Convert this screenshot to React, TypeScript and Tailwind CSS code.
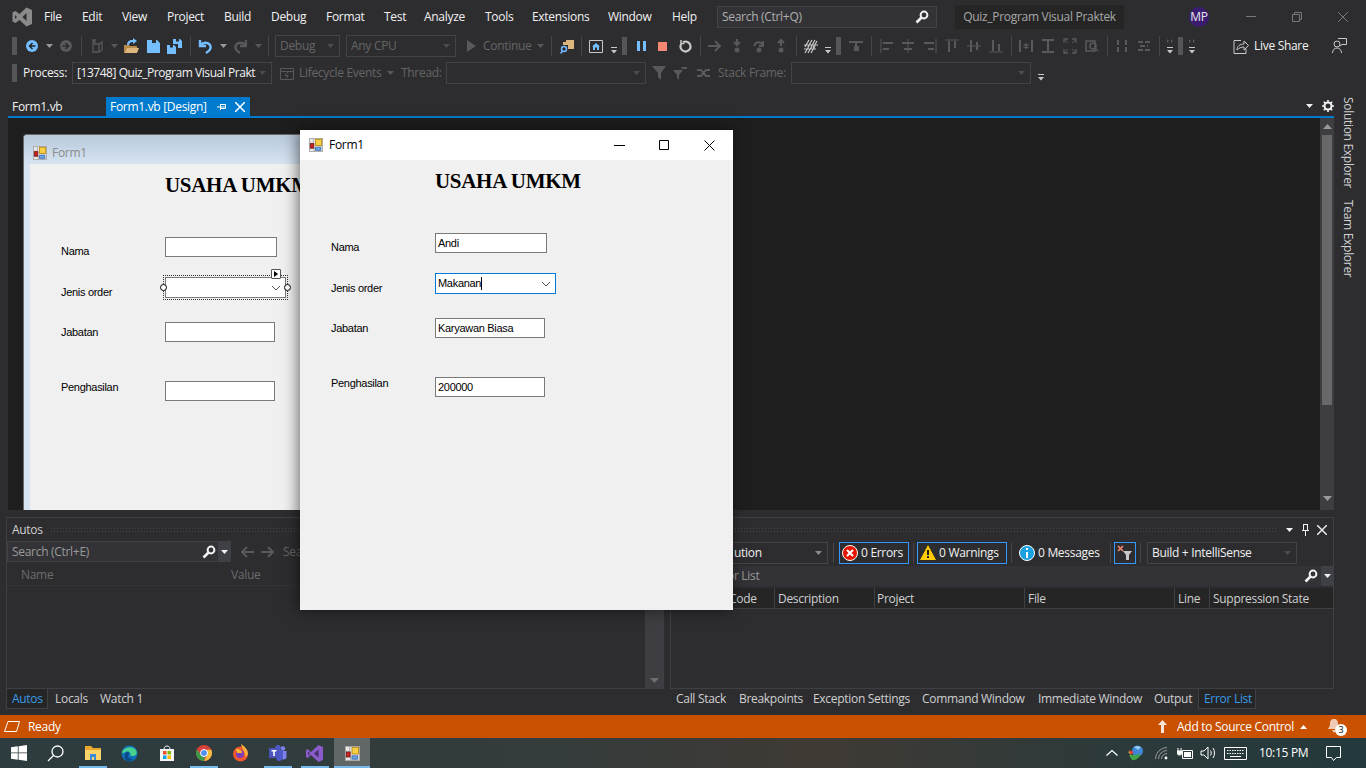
import type { ReactNode } from 'react';

const MENU = [
  { label: 'File', cls: 'w-[38px]' },
  { label: 'Edit', cls: 'w-[40px]' },
  { label: 'View', cls: 'w-[45px]' },
  { label: 'Project', cls: 'w-[57px]' },
  { label: 'Build', cls: 'w-[47px]' },
  { label: 'Debug', cls: 'w-[55px]' },
  { label: 'Format', cls: 'w-[58px]' },
  { label: 'Test', cls: 'w-[40px]' },
  { label: 'Analyze', cls: 'w-[61px]' },
  { label: 'Tools', cls: 'w-[47px]' },
  { label: 'Extensions', cls: 'w-[76px]' },
  { label: 'Window', cls: 'w-[64px]' },
  { label: 'Help', cls: 'w-[45px]' },
];

const ERROR_COLUMNS = [
  { label: 'Code', cls: 'w-[45px]' },
  { label: 'Description', cls: 'w-[100px] pl-[3px] border-l border-[#3f3f46]' },
  { label: 'Project', cls: 'w-[150px] pl-[2px] border-l border-[#3f3f46]' },
  { label: 'File', cls: 'w-[150px] pl-[3px] border-l border-[#3f3f46]' },
  { label: 'Line', cls: 'w-[35px] pl-[3px] border-l border-[#3f3f46]' },
  { label: 'Suppression State', cls: 'flex-1 pl-[3px] border-l border-[#3f3f46]' },
];

const BOTTOM_TABS = [
  { label: 'Call Stack', cls: 'w-[63px]' },
  { label: 'Breakpoints', cls: 'w-[74px]' },
  { label: 'Exception Settings', cls: 'w-[109px]' },
  { label: 'Command Window', cls: 'w-[116px]' },
  { label: 'Immediate Window', cls: 'w-[116px]' },
  { label: 'Output', cls: 'w-[44px]' },
];

function Down({ cls = 'text-[#8a8a8c]' }: { cls?: string }) {
  return (
    <svg width="7" height="4" viewBox="0 0 7 4" className={`shrink-0 ${cls}`}>
      <path d="M0 0h7L3.500 4z" fill="currentColor" />
    </svg>
  );
}

function Grip({ cls = '' }: { cls?: string }) {
  return <div className={`h-[18px] w-[5px] shrink-0 bg-[radial-gradient(#59595c_0.7px,transparent_0.8px)] bg-[length:2px_2px] ${cls}`} />;
}

function Sep({ cls = '' }: { cls?: string }) {
  return <div className={`h-[20px] w-px shrink-0 bg-[#46464a] ${cls}`} />;
}

function Overflow({ cls = '' }: { cls?: string }) {
  return (
    <svg width="6" height="7" viewBox="0 0 6 7" className={`mt-[9px] shrink-0 ${cls}`}>
      <path d="M0 .5h6" stroke="#c8c8c8" />
      <path d="M0 3h6L3 6.500z" fill="#c8c8c8" />
    </svg>
  );
}

function Magnifier({ cls = '' }: { cls?: string }) {
  return (
    <svg width="14" height="14" viewBox="0 0 14 14" className={`shrink-0 ${cls}`}>
      <circle cx="9" cy="5" r="3.400" fill="none" stroke="#f1f1f1" strokeWidth="2" />
      <path d="M6.500 7.500 1.500 12.500" stroke="#f1f1f1" strokeWidth="2.600" />
    </svg>
  );
}

function G({ w = 14, cls = '', children }: { w?: number; cls?: string; children: ReactNode }) {
  return (
    <svg width={w} height="16" viewBox={`0 0 ${w} 16`} className={`shrink-0 ${cls}`} fill="none" stroke="#59595c" strokeWidth="2">
      {children}
    </svg>
  );
}

function Combo({ label, cls, active = false }: { label?: string; cls: string; active?: boolean }) {
  return (
    <div className={`flex h-[22px] shrink-0 items-center justify-between border border-[#434346] pl-[4px] pr-[5px] ${active ? 'bg-[#333337] text-[#f1f1f1]' : 'text-[#656565]'} ${cls}`}>
      <span className="whitespace-nowrap">{label}</span>
      <Down cls={active ? 'text-[#999999]' : 'text-[#4c4c4e]'} />
    </div>
  );
}

function FormIcon({ size = 16 }: { size?: number }) {
  return (
    <svg width={size} height={size} viewBox="0 0 16 16" className="shrink-0">
      <rect x="0.500" y="0.500" width="15" height="15" fill="#e8e8e8" stroke="#a8a8a8" />
      <path d="M0 6h6M5 0v6M0 12h6M6 12v4M11 10v6" stroke="#a8a8a8" />
      <rect x="7.500" y="1.500" width="7" height="7" fill="#f6cf45" stroke="#b98a12" />
      <rect x="1.500" y="6.500" width="4" height="5" fill="#d02020" stroke="#7c1515" />
      <rect x="7.500" y="10.500" width="6" height="3.500" fill="#6ea4e4" stroke="#3a70b8" />
    </svg>
  );
}

function Field({ value, cls }: { value?: string; cls: string }) {
  return (
    <div className={`absolute flex h-[20px] items-center border border-[#7a7a7a] bg-white pl-[2px] pt-[1px] text-[#000000] ${cls}`}>
      {value}
    </div>
  );
}

function Caption({ text, cls }: { text: string; cls: string }) {
  return <div className={`absolute whitespace-nowrap leading-[13px] text-[#000000] ${cls}`}>{text}</div>;
}

function FormFields({ values, focused }: { values: string[]; focused: boolean }) {
  return (
    <div className="font-['Liberation_Sans',Arial,sans-serif] text-[11px]">
      <div className="absolute left-[135px] top-[8px] whitespace-nowrap font-['Liberation_Serif',serif] text-[21px] font-bold leading-[26px] text-[#000000]">USAHA UMKM</div>
      <Caption text="Nama" cls="left-[31px] top-[81px]" />
      <Caption text="Jenis order" cls="left-[31px] top-[122px]" />
      <Caption text="Jabatan" cls="left-[31px] top-[162px]" />
      <Caption text="Penghasilan" cls="left-[31px] top-[217px]" />
      <Field value={values[0]} cls="left-[135px] top-[73px] w-[112px]" />
      <div className={`absolute left-[135px] top-[113px] flex h-[21px] w-[121px] items-center justify-between border bg-white pl-[2px] pr-[4px] text-[#000000] ${focused ? 'border-[#0078d7]' : 'border-[#7a7a7a]'}`}>
        <span className="flex items-center">
          {values[1]}
          {focused && <span className="h-[13px] w-px bg-black" />}
        </span>
        <svg width="10" height="6" viewBox="0 0 10 6">
          <path d="M1 1l4 4 4-4" fill="none" stroke="#555555" />
        </svg>
      </div>
      <Field value={values[2]} cls="left-[135px] top-[158px] w-[110px]" />
      <Field value={values[3]} cls="left-[135px] top-[217px] w-[110px]" />
    </div>
  );
}

function TitleBar() {
  return (
    <div className="flex h-[33px] shrink-0 items-center">
      <svg width="20" height="20" viewBox="0 0 20 20" className="ml-[12px] shrink-0">
        <path fillRule="evenodd" fill="#8a8a8a" d="M14.500 0.500 20 3v14l-5.500 2.500L7.500 13l-4 3L0.500 14.500v-9L3.500 4l4 3zM14.500 6 10.500 10l4 4zM3 8v4l2-2z" />
      </svg>
      <div className="ml-[12px] flex w-[673px] shrink-0 text-[#f1f1f1]">
        {MENU.map((m) => (
          <span key={m.label} className={`whitespace-nowrap ${m.cls}`}>{m.label}</span>
        ))}
      </div>
      <div className="flex h-[22px] w-[220px] shrink-0 items-center justify-between border border-[#434346] bg-[#333337] pl-[4px] pr-[7px] text-[#aeaeae]">
        <span>Search (Ctrl+Q)</span>
        <Magnifier />
      </div>
      <div className="ml-[18px] flex h-[24px] w-[169px] shrink-0 items-center justify-center whitespace-nowrap bg-[#252526] text-[#a8a8a8]">Quiz_Program Visual Praktek</div>
      <div className="ml-[65px] flex h-[20px] w-[20px] shrink-0 items-center justify-center rounded-full bg-[#3a1c71] text-[#e6e6e6]">MP</div>
      <svg width="10" height="1" viewBox="0 0 10 1" className="ml-[37px] shrink-0"><path d="M0 .5h10" stroke="#777777" /></svg>
      <svg width="10" height="10" viewBox="0 0 10 10" className="ml-[36px] shrink-0" fill="none" stroke="#777777">
        <path d="M.5 2.500h7v7h-7zM2.500 2.500v-2h7v7h-2" />
      </svg>
      <svg width="10" height="10" viewBox="0 0 10 10" className="ml-[36px] shrink-0" stroke="#777777">
        <path d="M0 0l10 10M10 0L0 10" />
      </svg>
    </div>
  );
}

function MainToolbar() {
  return (
    <div className="flex h-[27px] shrink-0 items-center pb-[1px] pl-[12px]">
      <Grip />
      <svg width="12" height="12" viewBox="0 0 12 12" className="ml-[9px] shrink-0">
        <circle cx="6" cy="6" r="6" fill="#75beff" />
        <path d="M6.500 3 3.500 6l3 3M3.500 6h6" stroke="#252526" strokeWidth="1.500" fill="none" />
      </svg>
      <Down cls="ml-[8px] text-[#999999]" />
      <svg width="12" height="12" viewBox="0 0 12 12" className="ml-[7px] shrink-0">
        <circle cx="6" cy="6" r="6" fill="#59595c" />
        <path d="M5.500 3l3 3-3 3M8.500 6h-6" stroke="#2d2d30" strokeWidth="1.500" fill="none" />
      </svg>
      <Sep cls="ml-[9px]" />
      <G cls="ml-[8px]" w={14}>
        <path d="M3 6h6v8H3zM9 6l3-2v8l-3 2" strokeWidth="1.300" />
        <path d="M4 1v4M2 3h4M2 1l4 4M6 1 2 5" strokeWidth="1" />
      </G>
      <Down cls="ml-[7px] text-[#59595c]" />
      <svg width="15" height="16" viewBox="0 0 15 16" className="ml-[6px] shrink-0">
        <path d="M0 7h5l1 1h7v2H4l-1.500 5H0z" fill="#b88a4c" />
        <path d="M3 10h12l-2 5H1z" fill="#dcb67a" />
        <path d="M3 7C3 3 6 1.500 9 2V0l4 3-4 3V4C7 3.500 5 5 5 7z" fill="#75beff" />
      </svg>
      <svg width="13" height="13" viewBox="0 0 13 13" className="ml-[8px] shrink-0">
        <path fillRule="evenodd" fill="#75beff" d="M0 0h10l3 3v10H0zM5 0v3h4V0z" />
      </svg>
      <svg width="15" height="15" viewBox="0 0 15 15" className="ml-[7px] shrink-0">
        <path fillRule="evenodd" fill="#75beff" d="M6 0h7l2 2v7h-4V5H6zM9 0v2.500h3V0z" />
        <path fillRule="evenodd" fill="#75beff" d="M0 6h7l2 2v7H0zM3 6v2.500h3V6z" />
      </svg>
      <Sep cls="ml-[8px]" />
      <svg width="14" height="15" viewBox="0 0 14 15" className="ml-[7px] shrink-0" fill="none" stroke="#75beff" strokeWidth="2.400">
        <path d="M2 1v6h6M2.500 6.500C5 3 10 3 12 6c1.500 3-.5 6-4 8" />
      </svg>
      <Down cls="ml-[8px] text-[#999999]" />
      <svg width="13" height="15" viewBox="0 0 13 15" className="ml-[7px] shrink-0" fill="none" stroke="#59595c" strokeWidth="2.400">
        <path d="M12 1v6H6M11.500 6.500C9 3 4 3 2 6c-1.500 3 .5 6 4 8" />
      </svg>
      <Down cls="ml-[8px] text-[#59595c]" />
      <Sep cls="ml-[6px]" />
      <Combo label="Debug" cls="ml-[6px] w-[65px]" />
      <Combo label="Any CPU" cls="ml-[6px] w-[110px]" />
      <svg width="9" height="12" viewBox="0 0 9 12" className="ml-[11px] shrink-0"><path d="M0 0l9 6-9 6z" fill="#59595c" /></svg>
      <span className="ml-[7px] w-[49px] shrink-0 whitespace-nowrap text-[#656565]">Continue</span>
      <Down cls="ml-[5px] text-[#59595c]" />
      <Sep cls="ml-[7px]" />
      <svg width="14" height="15" viewBox="0 0 14 15" className="ml-[8px] shrink-0">
        <path d="M3 3h3V1h8v9H8V6H3z" fill="#dcb67a" />
        <circle cx="4" cy="10" r="2.500" fill="none" stroke="#75beff" strokeWidth="1.500" />
        <path d="M2.500 12 .5 14.500" stroke="#75beff" strokeWidth="1.500" />
      </svg>
      <Sep cls="ml-[7px]" />
      <svg width="14" height="13" viewBox="0 0 14 13" className="ml-[7px] shrink-0">
        <path d="M.5.500h13v12H.5z" fill="none" stroke="#c8c8c8" />
        <path d="M7 3l4 3.500H10V10H8V7.500H6V10H4V6.500H3z" fill="#75beff" />
      </svg>
      <Overflow cls="ml-[8px]" />
      <Grip cls="ml-[5px]" />
      <svg width="9" height="10" viewBox="0 0 9 10" className="ml-[10px] shrink-0"><path d="M0 0h3v10H0zM6 0h3v10H6z" fill="#75beff" /></svg>
      <div className="ml-[12px] h-[9px] w-[9px] shrink-0 bg-[#f48771]" />
      <svg width="13" height="14" viewBox="0 0 13 14" className="ml-[12px] shrink-0" fill="none" stroke="#c8c8c8" strokeWidth="2.200">
        <path d="M4 3.200A5 5 0 1 1 2.200 5" />
        <path d="M2 1v3.500h3.500" strokeWidth="1.500" />
      </svg>
      <Sep cls="ml-[8px]" />
      <G cls="ml-[7px]"><path d="M0 8h12M7 3l5 5-5 5" /></G>
      <G cls="ml-[9px]" w={12}><path d="M6 1v6M3 4l3 3 3-3" /><circle cx="6" cy="12" r="1.500" fill="#59595c" /></G>
      <G cls="ml-[9px]"><path d="M2 8c2-5 7-5 9 0M11 3v5H7" /><circle cx="7" cy="12" r="1.500" fill="#59595c" /></G>
      <G cls="ml-[9px]" w={12}><path d="M6 8V2M3 5l3-3 3 3" /><circle cx="6" cy="12" r="1.500" fill="#59595c" /></G>
      <Sep cls="ml-[9px]" />
      <svg width="14" height="15" viewBox="0 0 14 15" className="ml-[7px] shrink-0" stroke="#c8c8c8" strokeWidth="1.200" fill="none">
        <path d="M5 1 1 8M8 1 4 8M11 1 7 8M13 2 9 9M5 7l-4 7M8 7l-4 7M11 7l-4 7M0 6h14M0 10h12" />
      </svg>
      <Overflow cls="ml-[7px]" />
      <Grip cls="ml-[5px]" />
      <G cls="ml-[8px]"><path d="M0 4h14M7 4v9" /><path d="M5 8h5v5H5z" fill="#59595c" strokeWidth="0" /></G>
      <Sep cls="ml-[8px]" />
      <G cls="ml-[8px]"><path d="M1 1v14" strokeWidth="1" /><path d="M3 5h10M3 11h6" /></G>
      <G cls="ml-[7px]"><path d="M7 1v14" strokeWidth="1" /><path d="M1 5h12M3 11h8" /></G>
      <G cls="ml-[8px]"><path d="M13 1v14" strokeWidth="1" /><path d="M1 5h10M5 11h6" /></G>
      <G cls="ml-[8px]"><path d="M0 2h14" strokeWidth="1" /><path d="M4 3v11M10 3v7" /></G>
      <G cls="ml-[8px]"><path d="M0 8h14" strokeWidth="1" /><path d="M4 2v12M10 4v8" /></G>
      <G cls="ml-[8px]"><path d="M0 14h14" strokeWidth="1" /><path d="M4 2v11M10 6v7" /></G>
      <Sep cls="ml-[8px]" />
      <G cls="ml-[7px]"><path d="M1 2v12M13 2v12" /><path d="M7 5v6M4.500 6.500l5 3M9.500 6.500l-5 3" strokeWidth="1.300" /></G>
      <G cls="ml-[8px]"><path d="M1 2h12M1 14h12M7 3v10" /></G>
      <G cls="ml-[8px]"><path d="M1 5V1h4M13 5V1H9M1 11v4h4M13 11v4H9" strokeWidth="1.300" /><path d="M2 2l3 3M12 2 9 5M2 14l3-3M12 14l-3-3" strokeWidth="1" /></G>
      <G cls="ml-[8px]"><path d="M1 3h9v10H1z" strokeWidth="1.500" /><circle cx="8" cy="8" r="3" strokeWidth="1.500" /><path d="M10 10l3 3" strokeWidth="1.500" /></G>
      <Sep cls="ml-[8px]" />
      <G cls="ml-[9px]" w={10}><path d="M1 2v12M9 2v12" strokeDasharray="5 2" /></G>
      <G cls="ml-[10px]"><path d="M1 4h12M3 8h8M1 12h12" strokeDasharray="5 2" /></G>
      <Sep cls="ml-[8px]" />
      <div className="ml-[7px] flex shrink-0 flex-col items-center gap-[4px]">
        <svg width="6" height="4" viewBox="0 0 6 4"><path d="M0 0l2 2-2 2zM4 0l2 2-2 2z" fill="#59595c" /></svg>
        <Overflow cls="!mt-0" />
      </div>
      <Grip cls="ml-[5px]" />
      <div className="ml-[6px] flex shrink-0 flex-col items-center gap-[4px]">
        <svg width="6" height="4" viewBox="0 0 6 4"><path d="M0 0l2 2-2 2zM4 0l2 2-2 2z" fill="#59595c" /></svg>
        <Overflow cls="!mt-0" />
      </div>
      <svg width="16" height="16" viewBox="0 0 16 16" className="ml-[38px] shrink-0" fill="none" stroke="#c8c8c8">
        <path d="M8 2.500H1v13h12v-5" />
        <path d="M4 12c0-4 3-6 7-6V3l4.500 4.500L11 12V9c-3 0-5 1-7 3z" fill="#2d2d30" />
      </svg>
      <span className="ml-[5px] w-[54px] shrink-0 whitespace-nowrap text-[#f1f1f1]">Live Share</span>
      <svg width="15" height="16" viewBox="0 0 15 16" className="ml-[24px] shrink-0" fill="none" stroke="#c8c8c8">
        <circle cx="5" cy="6" r="3" />
        <path d="M.5 15c0-3 2-5 4.500-5s4.500 2 4.500 5" />
        <path d="M6 .5h8.500v6H10L8 8" />
      </svg>
    </div>
  );
}

function DebugToolbar() {
  return (
    <div className="flex h-[26px] shrink-0 items-center pl-[12px]">
      <Grip />
      <span className="ml-[6px] w-[43px] shrink-0 whitespace-nowrap text-[#f1f1f1]">Process:</span>
      <Combo label="[13748] Quiz_Program Visual Prakt" cls="ml-[6px] w-[200px] !text-[#f1f1f1] tracking-[-0.45px]" />
      <svg width="14" height="13" viewBox="0 0 14 13" className="ml-[8px] shrink-0" fill="none" stroke="#59595c">
        <path d="M.5 1.500h13v11H.5zM.5 4.500h13" />
        <path d="M8 5 5 8.500h3L6 11.500" />
      </svg>
      <span className="ml-[5px] w-[83px] shrink-0 whitespace-nowrap text-[#656565]">Lifecycle Events</span>
      <Down cls="ml-[5px] text-[#59595c]" />
      <span className="ml-[7px] w-[38px] shrink-0 whitespace-nowrap text-[#656565]">Thread:</span>
      <Combo cls="ml-[7px] w-[200px]" />
      <svg width="14" height="14" viewBox="0 0 14 14" className="ml-[6px] shrink-0"><path d="M0 0h14L9 7v7L6 11V7z" fill="#59595c" /></svg>
      <svg width="15" height="13" viewBox="0 0 15 13" className="ml-[7px] shrink-0"><path d="M0 3h10L6 8v5L4 11V8zM8 0h6v2H9z" fill="#59595c" /></svg>
      <svg width="15" height="10" viewBox="0 0 15 10" className="ml-[8px] shrink-0" fill="none" stroke="#59595c" strokeWidth="2"><path d="M1 2h4l5 6h4M1 8h4l5-6h4" /></svg>
      <span className="ml-[7px] w-[66px] shrink-0 whitespace-nowrap text-[#656565]">Stack Frame:</span>
      <Combo cls="ml-[7px] w-[240px]" />
      <Overflow cls="ml-[7px]" />
    </div>
  );
}

function DocTabs() {
  return (
    <div className="ml-[8px] flex h-[32px] shrink-0 items-end border-b-2 border-[#007acc]">
      <div className="flex h-[19px] w-[98px] items-center pl-[4px] text-[#f1f1f1]">Form1.vb</div>
      <div className="flex h-[19px] w-[144px] items-center bg-[#007acc] pl-[4px] text-[#ffffff]">
        <span className="w-[107px] whitespace-nowrap">Form1.vb [Design]</span>
        <svg width="10" height="8" viewBox="0 0 10 8" fill="none" stroke="#ffffff"><path d="M0 4h3M3.500 1v6M3.500 1.500h5v4h-5M3.500 4h5" /></svg>
        <svg width="10" height="10" viewBox="0 0 10 10" className="ml-[8px]" stroke="#ffffff" strokeWidth="1.500"><path d="M0 0l10 10M10 0L0 10" /></svg>
      </div>
      <div className="ml-auto mb-[4px] flex items-center gap-[9px]">
        <Down cls="text-[#f1f1f1]" />
        <svg width="12" height="12" viewBox="0 0 12 12">
          <circle cx="6" cy="6" r="3.500" fill="none" stroke="#f1f1f1" strokeWidth="2" />
          <path d="M6 0v2.500M6 9.500V12M0 6h2.500M9.500 6H12M1.800 1.800l1.800 1.800M8.400 8.400l1.800 1.800M10.200 1.800 8.400 3.600M3.600 8.400l-1.800 1.800" stroke="#f1f1f1" strokeWidth="1.600" />
        </svg>
      </div>
    </div>
  );
}

function DesignerForm() {
  return (
    <div className="absolute left-[15px] top-[16px] flex h-[376px] w-[500px] flex-col rounded-t-[4px] border-l border-t border-[#6a6a6a] bg-[#d7e4f2]">
      <div className="flex h-[29px] shrink-0 items-center gap-[5px] rounded-t-[4px] bg-[linear-gradient(#b9c9da,#d6e4f2)] pl-[9px] pt-[6px] text-[#8c8c8c]">
        <FormIcon size={14} />
        <span>Form1</span>
      </div>
      <div className="relative ml-[6px] flex-1 bg-[#f0f0f0]">
        <FormFields values={['', '', '', '']} focused={false} />
        <div className="absolute left-[133px] top-[111px] h-[25px] w-[125px] border border-dotted border-[#333333]" />
        <div className="absolute left-[130px] top-[120px] h-[7px] w-[7px] rounded-full border border-black bg-white" />
        <div className="absolute left-[254px] top-[120px] h-[7px] w-[7px] rounded-full border border-black bg-white" />
        <div className="absolute left-[241px] top-[105px] flex h-[10px] w-[10px] items-center justify-center rounded-[1px] border border-[#555555] bg-white">
          <svg width="4" height="6" viewBox="0 0 4 6"><path d="M0 0l4 3-4 3z" fill="#000000" /></svg>
        </div>
      </div>
    </div>
  );
}

function DocArea() {
  return (
    <div className="flex h-[392px] shrink-0 pl-[8px]">
      <div className="relative flex-1 bg-[#1e1e1e]">
        <DesignerForm />
      </div>
      <div className="flex w-[14px] shrink-0 flex-col items-center bg-[#3e3e42] pt-[6px]">
        <svg width="9" height="5" viewBox="0 0 9 5"><path d="M0 5h9L4.500 0z" fill="#999999" /></svg>
        <div className="mt-[6px] h-[270px] w-[10px] bg-[#686868]" />
        <svg width="9" height="5" viewBox="0 0 9 5" className="mt-[91px]"><path d="M0 0h9L4.500 5z" fill="#999999" /></svg>
      </div>
    </div>
  );
}

function AutosPanel() {
  return (
    <div className="ml-[6px] flex h-[172px] w-[658px] shrink-0 flex-col border border-[#3f3f46]">
      <div className="flex h-[23px] shrink-0 items-center pl-[5px] text-[#d0d0d0]">
        <span className="w-[38px]">Autos</span>
        <div className="h-[5px] flex-1 bg-[radial-gradient(#46464a_0.7px,transparent_0.8px)] bg-[length:3px_3px]" />
      </div>
      <div className="flex min-h-0 flex-1">
        <div className="flex min-w-0 flex-1 flex-col">
          <div className="flex h-[21px] shrink-0 items-center">
            <div className="flex h-[21px] w-[224px] shrink-0 items-center justify-between border border-[#3f3f46] bg-[#333337] pl-[4px] text-[#999999]">
              <span>Search (Ctrl+E)</span>
              <div className="flex h-full items-center">
                <Magnifier cls="mr-[2px]" />
                <div className="flex h-full w-[12px] items-center justify-center bg-[#3f3f46]"><Down cls="text-[#f1f1f1]" /></div>
              </div>
            </div>
            <svg width="14" height="12" viewBox="0 0 14 12" className="ml-[9px]" fill="none" stroke="#59595c" strokeWidth="2"><path d="M14 6H2M7 1 2 6l5 5" /></svg>
            <svg width="14" height="12" viewBox="0 0 14 12" className="ml-[7px]" fill="none" stroke="#59595c" strokeWidth="2"><path d="M0 6h12M7 1l5 5-5 5" /></svg>
            <span className="ml-[8px] text-[#656565]">Sea</span>
          </div>
          <div className="mt-[3px] flex h-[21px] shrink-0 items-center border-b border-[#333337] pl-[14px] text-[#6b6b6b]">
            <span className="w-[210px]">Name</span>
            <span>Value</span>
          </div>
        </div>
        <div className="flex w-[18px] shrink-0 flex-col items-center justify-end bg-[#3e3e42] pb-[5px]">
          <svg width="9" height="5" viewBox="0 0 9 5"><path d="M0 0h9L4.500 5z" fill="#6e6e6e" /></svg>
        </div>
      </div>
    </div>
  );
}

function CountButton({ cls, label, on = true, children }: { cls: string; label: string; on?: boolean; children: ReactNode }) {
  return (
    <div className={`flex h-[22px] shrink-0 items-center gap-[3px] border pl-[2px] text-[#f1f1f1] ${on ? 'border-[#3399ff]' : 'border-transparent'} ${cls}`}>
      {children}
      <span className="whitespace-nowrap">{label}</span>
    </div>
  );
}

function ErrorPanel() {
  return (
    <div className="ml-[6px] flex h-[172px] w-[664px] shrink-0 flex-col border border-[#3f3f46]">
      <div className="flex h-[23px] shrink-0 items-center justify-end">
        <div className="mr-[8px] h-[5px] flex-1 bg-[radial-gradient(#46464a_0.7px,transparent_0.8px)] bg-[length:3px_3px]" />
        <Down cls="text-[#f1f1f1]" />
        <svg width="7" height="12" viewBox="0 0 7 12" className="ml-[9px]" fill="none" stroke="#f1f1f1"><path d="M1 .5h5M1.500 .5v6M5.500 .5v6M0 6.500h7M3.500 7v5" /></svg>
        <svg width="10" height="10" viewBox="0 0 10 10" className="ml-[8px] mr-[6px]" stroke="#f1f1f1" strokeWidth="1.400"><path d="M0 0l10 10M10 0 0 10" /></svg>
      </div>
      <div className="flex h-[23px] shrink-0 items-center">
        <div className="flex h-[22px] w-[157px] shrink-0 items-center justify-between border border-[#434346] pl-[62px] pr-[5px] text-[#f1f1f1]">
          <span>ution</span>
          <Down cls="text-[#8a8a8c]" />
        </div>
        <Sep cls="ml-[5px]" />
        <CountButton cls="ml-[5px] w-[70px]" label="0 Errors">
          <svg width="16" height="16" viewBox="0 0 16 16" className="shrink-0">
            <circle cx="8" cy="8" r="7.500" fill="#e51400" stroke="#ffffff" />
            <path d="M5 5l6 6M11 5l-6 6" stroke="#ffffff" strokeWidth="2" />
          </svg>
        </CountButton>
        <Sep cls="ml-[4px]" />
        <CountButton cls="ml-[3px] w-[90px]" label="0 Warnings">
          <svg width="16" height="15" viewBox="0 0 16 15" className="shrink-0">
            <path d="M8 0l8 15H0z" fill="#ffcc00" />
            <path d="M7 5h2v5H7zM7 11h2v2H7z" fill="#1e1e1e" />
          </svg>
        </CountButton>
        <Sep cls="ml-[4px]" />
        <CountButton cls="ml-[4px] w-[80px]" label="0 Messages" on={false}>
          <svg width="16" height="16" viewBox="0 0 16 16" className="shrink-0">
            <circle cx="8" cy="8" r="7.500" fill="#1ba1e2" stroke="#ffffff" />
            <path d="M7 3h2v2H7zM7 7h2v6H7z" fill="#ffffff" />
          </svg>
        </CountButton>
        <Sep cls="ml-[14px]" />
        <div className="ml-[3px] flex h-[22px] w-[22px] shrink-0 items-center justify-center border border-[#3399ff]">
          <svg width="16" height="15" viewBox="0 0 16 15">
            <path d="M1 1l5 5M6 1 1 6" stroke="#f48771" strokeWidth="1.600" />
            <path d="M6 6h9l-3 4v5h-3v-5z" fill="#c8c8c8" />
          </svg>
        </div>
        <Sep cls="ml-[4px]" />
        <Combo label="Build + IntelliSense" cls="ml-[6px] w-[150px] !text-[#f1f1f1]" />
      </div>
      <div className="mt-[2px] flex h-[20px] shrink-0 items-center justify-between bg-[#333337] pl-[56px] text-[#999999]">
        <span>or List</span>
        <div className="flex h-full items-center">
          <Magnifier cls="mr-[3px]" />
          <div className="flex h-full w-[12px] items-center justify-center bg-[#3f3f46]"><Down cls="text-[#f1f1f1]" /></div>
        </div>
      </div>
      <div className="mt-[2px] flex h-[21px] shrink-0 items-center border-b border-[#3f3f46] bg-[#252526] pl-[58px] text-[#d0d0d0]">
        {ERROR_COLUMNS.map((c) => (
          <div key={c.label} className={`flex h-full shrink-0 items-center whitespace-nowrap pt-[1px] ${c.cls}`}>{c.label}</div>
        ))}
      </div>
    </div>
  );
}

function BottomTabs() {
  return (
    <div className="flex h-[26px] shrink-0">
      <div className="ml-[6px] flex h-[20px] w-[42px] shrink-0 items-center border border-t-0 border-[#3f3f46] bg-[#252526] pl-[5px] text-[#3a9ce8]">Autos</div>
      <div className="flex h-[20px] w-[52px] shrink-0 items-center pl-[7px] text-[#d0d0d0]">Locals</div>
      <div className="flex h-[20px] w-[576px] shrink-0 items-center text-[#d0d0d0]">Watch 1</div>
      {BOTTOM_TABS.map((t) => (
        <div key={t.label} className={`flex h-[20px] shrink-0 items-center whitespace-nowrap text-[#d0d0d0] ${t.cls}`}>{t.label}</div>
      ))}
      <div className="flex h-[20px] w-[58px] shrink-0 items-center border border-t-0 border-[#3f3f46] bg-[#252526] pl-[5px] text-[#3a9ce8]">Error List</div>
    </div>
  );
}

function StatusBar() {
  return (
    <div className="flex h-[23px] shrink-0 items-center bg-[#ca5100] text-[#ffffff]">
      <svg width="16" height="11" viewBox="0 0 16 11" className="ml-[4px] shrink-0" fill="none" stroke="#ffffff">
        <path d="M4 .5h11.500l-3 10H.5z" />
      </svg>
      <span className="ml-[8px]">Ready</span>
      <svg width="9" height="13" viewBox="0 0 9 13" className="ml-auto shrink-0" fill="#ffffff" fillOpacity="0.85">
        <path d="M4.500 0 9 5H6v8H3V5H0z" />
      </svg>
      <span className="ml-[10px] whitespace-nowrap">Add to Source Control</span>
      <svg width="7" height="4" viewBox="0 0 7 4" className="ml-[6px] shrink-0"><path d="M0 4h7L3.500 0z" fill="#ffffff" /></svg>
      <div className="relative ml-[21px] mr-[22px] h-[16px] w-[16px] shrink-0">
        <svg width="12" height="14" viewBox="0 0 12 14"><path d="M6 0c3 0 4 2 4 5 0 3 2 4 2 5H0c0-1 2-2 2-5 0-3 1-5 4-5zM4 11h4l-2 3z" fill="#ffffff" fillOpacity="0.7" /></svg>
        <div className="absolute left-[7px] top-[5px] flex h-[12px] w-[12px] items-center justify-center rounded-full bg-white text-[9px] leading-none text-black">3</div>
      </div>
    </div>
  );
}

function TaskSlot({ cls = '', active = false, open = false, children }: { cls?: string; active?: boolean; open?: boolean; children: ReactNode }) {
  return (
    <div className={`relative flex h-[30px] w-[37px] shrink-0 items-center justify-center ${active ? 'bg-[#606766]' : ''} ${cls}`}>
      {children}
      {open && <div className={`absolute bottom-0 h-[2px] bg-[#76b9ed] ${active ? 'left-0 right-0' : 'left-[5px] right-[4px]'}`} />}
    </div>
  );
}

function Taskbar() {
  return (
    <div className="flex h-[30px] shrink-0 items-center bg-[linear-gradient(90deg,#2d3c3e_0%,#343c3c_40%,#403a34_60%,#2f3a3a_78%,#23393c_100%)] text-[#ffffff]">
      <TaskSlot>
        <svg width="16" height="16" viewBox="0 0 16 16"><path d="M0 2.300 6.800 1.300v6.200H0zM7.600 1.200 16 0v7.500H7.600zM0 8.300h6.800v6.400L0 13.700zM7.600 8.300H16V16l-8.400-1.200z" fill="#ffffff" /></svg>
      </TaskSlot>
      <TaskSlot>
        <svg width="17" height="17" viewBox="0 0 17 17" fill="none" stroke="#ffffff" strokeWidth="1.300"><circle cx="10.500" cy="6.500" r="5.500" /><path d="M6.500 10.500 1 16" /></svg>
      </TaskSlot>
      <TaskSlot open>
        <svg width="16" height="14" viewBox="0 0 16 14">
          <path d="M0 0h6l2 2h8v12H0z" fill="#e8a82e" />
          <path d="M0 4h16v10H0z" fill="#fbd46a" />
          <path d="M5 8h6v6H9v-3H7v3H5z" fill="#3a8bd8" />
        </svg>
      </TaskSlot>
      <TaskSlot>
        <svg width="17" height="17" viewBox="0 0 17 17">
          <circle cx="8.500" cy="8.500" r="8" fill="#0f70b8" />
          <path d="M1 7C3 2 12 0 15.500 6c1 3-1 5-4 5-2 0-3-1-2-2 0-2-3-3-5-2-2 1-3 2-3.500 0z" fill="#45d18f" />
          <path d="M6 16c-3-2-3-7 0-9 3-1 2 2 1 4 0 2 2 3 5 3-2 2-4 3-6 2z" fill="#0a4a86" />
        </svg>
      </TaskSlot>
      <TaskSlot>
        <svg width="16" height="16" viewBox="0 0 16 16">
          <path d="M1 4h14v12H1z" fill="#f5f5f5" />
          <path d="M5 4c0-4 6-4 6 0" fill="none" stroke="#f5f5f5" />
          <path d="M4 6h3.500v3.500H4z" fill="#f25022" />
          <path d="M8.500 6H12v3.500H8.500z" fill="#7fba00" />
          <path d="M4 10.500h3.500V14H4z" fill="#00a4ef" />
          <path d="M8.500 10.500H12V14H8.500z" fill="#ffb900" />
        </svg>
      </TaskSlot>
      <TaskSlot open>
        <svg width="16" height="16" viewBox="0 0 16 16">
          <circle cx="8" cy="8" r="8" fill="#d9413a" />
          <path d="M8 16A8 8 0 0 1 .8 4.500L5 10l4 1z" fill="#3a9a4a" />
          <path d="M15.300 4.700A8 8 0 0 1 8 16l3-6V4.700z" fill="#f2bd3c" />
          <circle cx="8" cy="8" r="3.500" fill="#4d8fe8" stroke="#ffffff" />
        </svg>
      </TaskSlot>
      <TaskSlot>
        <svg width="17" height="18" viewBox="0 0 17 18">
          <circle cx="8.500" cy="10" r="7.500" fill="#f0572f" />
          <path d="M9 0c3 2 7 5 7 10a5 5 0 0 1-3 3c1-4-3-8-4-13z" fill="#fbb03b" />
          <circle cx="8" cy="10" r="4" fill="#7d3fb8" />
          <path d="M4 5c3 0 6 1 6 4H5z" fill="#ffb52e" />
        </svg>
      </TaskSlot>
      <TaskSlot open>
        <svg width="18" height="16" viewBox="0 0 18 16">
          <circle cx="14" cy="3.500" r="2.200" fill="#7b83eb" />
          <path d="M11 6h6.500v6c0 1.500-1 2.500-3 2.500S11 13 11 12z" fill="#7b83eb" />
          <circle cx="9" cy="2.800" r="2.800" fill="#5059c9" />
          <path d="M7 5h7v7c0 2-2 4-4 4s-3-2-3-4z" fill="#5059c9" />
          <path d="M0 3h10v10H0z" fill="#4b53bc" />
          <path d="M2.500 5h5v1.500H5.800V11H4.200V6.500H2.500z" fill="#ffffff" />
        </svg>
      </TaskSlot>
      <TaskSlot open>
        <svg width="17" height="17" viewBox="0 0 17 17">
          <path d="M12.500 0 17 2v13l-4.500 2L5 10l-3.500 3L0 12V5l1.500-1L5 7z" fill="#8a5cc9" />
          <path d="M12.500 4.500 8 8.500l4.500 4z" fill="#44306c" />
          <path d="M2 6.500v4l2-2z" fill="#44306c" />
        </svg>
      </TaskSlot>
      <TaskSlot active open cls="ml-[1px] !w-[36px]">
        <FormIcon size={15} />
      </TaskSlot>
      <svg width="12" height="6" viewBox="0 0 12 6" className="ml-[736px] shrink-0" fill="none" stroke="#ffffff" strokeWidth="1.200"><path d="M.5 5.500l5.500-5 5.500 5" /></svg>
      <svg width="16" height="16" viewBox="0 0 16 16" className="ml-[10px] shrink-0">
        <circle cx="9.500" cy="6" r="5.500" fill="#3f86d6" />
        <path d="M6 2c2-1.500 5-1.500 7 .5L10 5z" fill="#8fc8f4" />
        <path d="M0 7c2-1 3 0 4 1l-1 2z" fill="#e8a22e" />
        <path d="M1 5l5 2-3 3z" fill="#d9413a" />
        <path d="M1 10c4 0 9 0 12-1-2 4-6 7-9 6z" fill="#3fa648" />
      </svg>
      <svg width="13" height="13" viewBox="0 0 13 13" className="ml-[11px] shrink-0" fill="none" stroke="#9a9a9a">
        <path d="M.5 12A11.500 11.500 0 0 1 12 .5M3.500 12A8.500 8.500 0 0 1 12 3.500M6.500 12A5.500 5.500 0 0 1 12 6.500" />
        <circle cx="11" cy="11" r="1.400" fill="#ffffff" stroke="none" />
      </svg>
      <svg width="16" height="11" viewBox="0 0 16 11" className="ml-[9px] shrink-0" fill="none" stroke="#ffffff">
        <path d="M5.500 2.500h10v8h-10z" />
        <path d="M7 4h7v5H7z" fill="#ffffff" stroke="none" />
        <path d="M1 0v3M4 0v3M0 3h5v2c0 1-1 2-2.500 2S0 6 0 5z" fill="#ffffff" />
      </svg>
      <svg width="16" height="16" viewBox="0 0 16 16" className="ml-[7px] shrink-0" fill="none" stroke="#ffffff">
        <path d="M1 6h3l4-4v12l-4-4H1z" />
        <path d="M10.500 5.500c1 1.500 1 3.500 0 5M13 3c2 3 2 7 0 10" />
      </svg>
      <svg width="23" height="13" viewBox="0 0 23 13" className="ml-[8px] shrink-0" fill="none" stroke="#ffffff">
        <path d="M.5.500h22v12H.5z" />
        <path d="M3 3.500h17M3 6.500h17" strokeDasharray="1.500 1" />
        <path d="M6 9.500h11" />
      </svg>
      <span className="ml-[12px] w-[48px] shrink-0 whitespace-nowrap">10:15 PM</span>
      <svg width="15" height="15" viewBox="0 0 15 15" className="ml-[19px] shrink-0" fill="none" stroke="#ffffff">
        <path d="M.5.500h14v11h-4l-3 3-2-3h-5z" />
      </svg>
    </div>
  );
}

function FloatingForm() {
  return (
    <div className="absolute left-[300px] top-[130px] flex h-[480px] w-[433px] flex-col bg-[#f0f0f0] shadow-[-2px_0_14px_rgba(0,0,0,0.55)]">
      <div className="flex h-[30px] shrink-0 items-center bg-white pl-[9px] text-[#000000]">
        <FormIcon size={14} />
        <span className="ml-[6px]">Form1</span>
        <svg width="11" height="1" viewBox="0 0 11 1" className="ml-auto shrink-0"><path d="M0 .5h11" stroke="#000000" /></svg>
        <svg width="10" height="10" viewBox="0 0 10 10" className="ml-[34px] shrink-0"><path d="M.5.500h9v9h-9z" fill="none" stroke="#000000" /></svg>
        <svg width="11" height="11" viewBox="0 0 11 11" className="ml-[35px] mr-[18px] shrink-0" stroke="#000000"><path d="M.5.500l10 10M10.500.5l-10 10" /></svg>
      </div>
      <div className="relative flex-1">
        <FormFields values={['Andi', 'Makanan', 'Karyawan Biasa', '200000']} focused />
      </div>
    </div>
  );
}

export default function App() {
  return (
    <div className="relative flex h-[768px] w-[1366px] flex-col overflow-hidden bg-[#2d2d30] font-['Open_Sans','Noto_Sans',sans-serif] text-[12px] leading-none tracking-[-0.3px]">
      <TitleBar />
      <MainToolbar />
      <DebugToolbar />
      <div className="flex h-[629px] shrink-0">
        <div className="flex w-[1334px] shrink-0 flex-col">
          <DocTabs />
          <DocArea />
          <div className="flex h-[205px] shrink-0 flex-col pt-[7px]">
            <div className="flex h-[172px] shrink-0">
              <AutosPanel />
              <ErrorPanel />
            </div>
            <BottomTabs />
          </div>
        </div>
        <div className="flex w-[32px] shrink-0 gap-[12px] pr-[12px] pt-[11px] text-[#d0d0d0] [writing-mode:vertical-rl]">
          <span className="whitespace-nowrap">Solution Explorer</span>
          <span className="whitespace-nowrap">Team Explorer</span>
        </div>
      </div>
      <StatusBar />
      <Taskbar />
      <FloatingForm />
    </div>
  );
}
